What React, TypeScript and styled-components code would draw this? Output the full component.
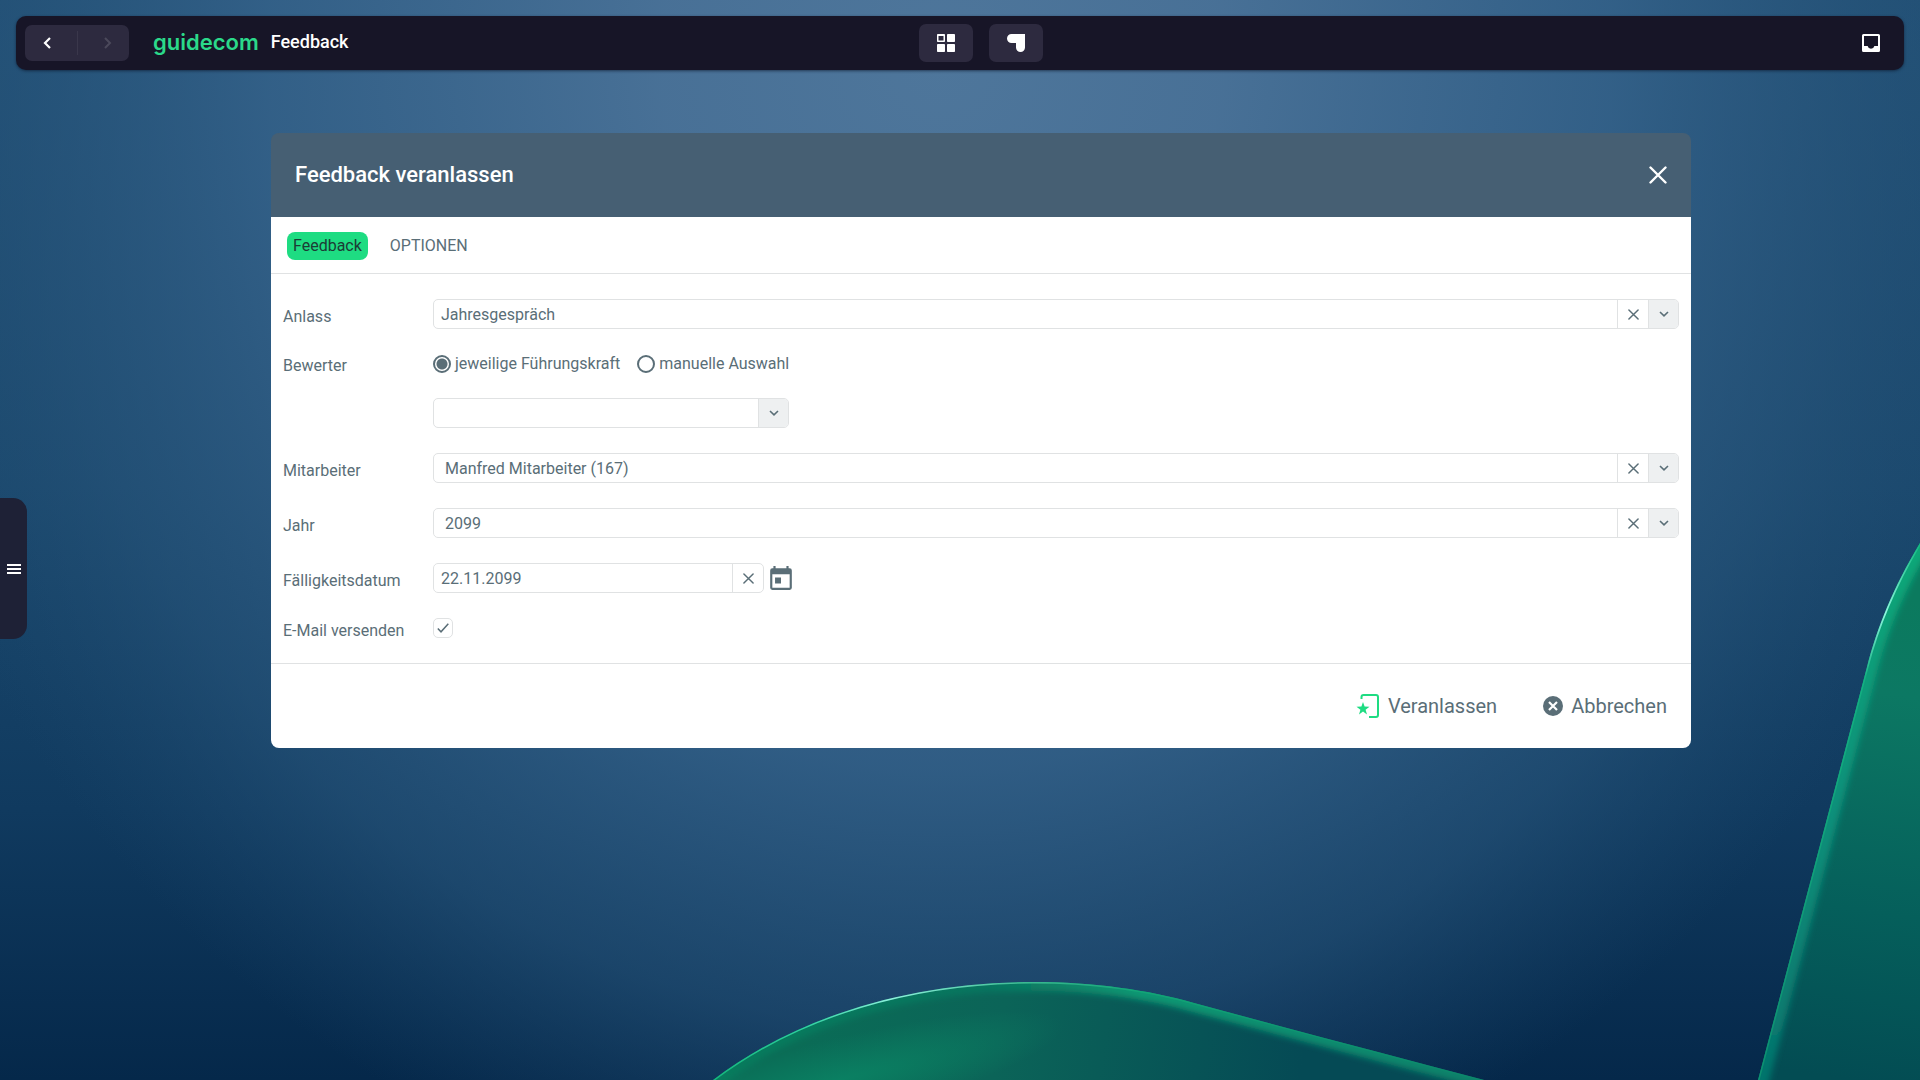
import React, { useRef, useState } from 'react';
import styled, { createGlobalStyle } from 'styled-components';

const ink = '#5a6e77';
const line = '#e0e2e3';
const green = '#1edc82';

const GlobalStyle = createGlobalStyle`
  *, *::before, *::after { box-sizing: border-box; }
  body {
    margin: 0;
    font-family: Roboto, 'Liberation Sans', sans-serif;
    font-size: 16px;
    line-height: 20px;
    color: ${ink};
    background: #143c60;
  }
  button, input, select { font: inherit; color: inherit; }
`;

const Page = styled.div`
  position: relative;
  display: flex;
  flex-direction: column;
  min-height: 100vh;
  padding: 16px;
  overflow: hidden;
  isolation: isolate;
`;

const Wallpaper = styled.svg`
  position: absolute;
  inset: 0;
  z-index: -1;
  width: 100%;
  height: 100%;
`;

const TopBar = styled.header`
  display: grid;
  grid-template-columns: 1fr auto 1fr;
  align-items: center;
  height: 54px;
  padding: 0 16px 0 9px;
  border-radius: 10px;
  background: #171527;
  box-shadow: 0 1px 3px rgba(10, 20, 40, 0.6);
  color: #fff;
`;

const BarStart = styled.div`
  display: flex;
  align-items: center;
`;

const History = styled.nav`
  display: flex;
  align-items: center;
  height: 36px;
  border-radius: 7px;
  background: #2d2a3f;
`;

const HistoryButton = styled.button`
  display: grid;
  place-items: center;
  width: 52px;
  height: 24px;
  padding: 0 8px 0 0;
  border: 0;
  background: none;
  color: #fff;

  & + & {
    padding: 0 0 0 8px;
    border-left: 1px solid #3a374b;
  }
  &:disabled { color: #4b495b; }
`;

const Names = styled.div`
  display: flex;
  align-items: center;
  gap: 12px;
  margin-left: 24px;
  padding-bottom: 2px;
`;

const Brand = styled.a`
  font-family: Inter, Roboto, sans-serif;
  font-size: 22px;
  font-weight: 600;
  line-height: 28px;
  color: #2bd98a;
  text-decoration: none;
`;

const AppName = styled.span`
  font-size: 18px;
  font-weight: 500;
  line-height: 24px;
`;

const BarCenter = styled.div`
  display: flex;
  gap: 16px;
  padding-left: 48px;
`;

const TileButton = styled.button`
  display: grid;
  place-items: center;
  width: 54px;
  height: 38px;
  padding: 0;
  border: 0;
  border-radius: 7px;
  background: #2d2a3f;
  color: #fff;
`;

const InboxButton = styled.button`
  display: grid;
  place-items: center;
  justify-self: end;
  width: 34px;
  height: 34px;
  padding: 0;
  border: 0;
  background: none;
  color: #fff;
`;

const DrawerHandle = styled.button`
  position: absolute;
  left: 0;
  top: 498px;
  display: grid;
  place-items: center end;
  width: 27px;
  height: 141px;
  padding: 0 6px 0 0;
  border: 0;
  border-radius: 0 14px 14px 0;
  background: #1e2136;
  color: #fff;
`;

const Dialog = styled.section`
  margin: 63px 213px 0 255px;
  border-radius: 8px;
  overflow: hidden;
`;

const DialogHeader = styled.header`
  display: flex;
  align-items: center;
  justify-content: space-between;
  height: 84px;
  padding: 0 24px;
  background: #465f73;
  color: #fff;
`;

const Title = styled.h1`
  margin: 0;
  font-size: 22px;
  font-weight: 500;
  line-height: 28px;
`;

const CloseButton = styled.button`
  display: grid;
  place-items: center;
  padding: 0;
  border: 0;
  background: none;
  color: inherit;
`;

const Tabs = styled.div`
  display: flex;
  align-items: center;
  gap: 16px;
  height: 57px;
  padding: 2px 16px 0;
  border-bottom: 1px solid ${line};
  background: #fff;
`;

const Tab = styled.button<{ $active?: boolean }>`
  height: 28px;
  padding: 0 6px;
  border: 0;
  border-radius: 8px;
  line-height: 20px;
  background: ${(p) => (p.$active ? green : 'transparent')};
  color: ${(p) => (p.$active ? '#1c3b35' : ink)};
`;

const Form = styled.form`
  background: #fff;
`;

const Rows = styled.div`
  display: flex;
  flex-direction: column;
  gap: 25px;
  padding: 25px 12px;
`;

const Row = styled.div`
  display: grid;
  grid-template-columns: 150px minmax(0, 1fr);
  align-items: center;
`;

const Label = styled.label`
  padding-top: 4px;
  line-height: 15px;
`;

const RadioGroup = styled.div`
  display: flex;
  gap: 17px;
  height: 19px;
`;

const Choice = styled.label`
  display: flex;
  align-items: center;
  gap: 4px;
`;

const Radio = styled.input`
  appearance: none;
  width: 18px;
  height: 18px;
  margin: 0;
  border: 2px solid ${ink};
  border-radius: 50%;

  &:checked {
    background: radial-gradient(circle, ${ink} 5px, transparent 6px);
  }
`;

const FieldBox = styled.div<{ $width?: number }>`
  display: flex;
  width: ${(p) => (p.$width ? p.$width + 'px' : '100%')};
  height: 30px;
  border: 1px solid ${line};
  border-radius: 5px;
  overflow: hidden;
`;

const Select = styled.select<{ $indent?: boolean }>`
  appearance: none;
  flex: 1;
  min-width: 0;
  padding: 1px ${(p) => (p.$indent ? 11 : 7)}px 0;
  border: 0;
  background: none;
`;

const TextInput = styled.input`
  flex: 1;
  min-width: 0;
  padding: 1px 7px 0;
  border: 0;
  background: none;
`;

const FieldButton = styled.button<{ $shaded?: boolean }>`
  display: grid;
  place-items: center;
  width: ${(p) => (p.$shaded ? 30 : 31)}px;
  padding: 0;
  border: 0;
  border-left: 1px solid ${line};
  background: ${(p) => (p.$shaded ? '#eef0f1' : 'none')};
`;

const DateGroup = styled.div`
  display: flex;
  align-items: center;
  gap: 4px;
`;

const IconButton = styled.button`
  display: grid;
  place-items: center;
  padding: 0;
  border: 0;
  background: none;
`;

const CheckWrap = styled.span`
  display: grid;
  width: 20px;
  height: 20px;

  > * { grid-area: 1 / 1; }
  > svg { place-self: center; pointer-events: none; }
  > input:not(:checked) + svg { visibility: hidden; }
`;

const Checkbox = styled.input`
  appearance: none;
  width: 20px;
  height: 20px;
  margin: 0;
  border: 1px solid ${line};
  border-radius: 5px;
`;

const Actions = styled.footer`
  display: flex;
  align-items: center;
  justify-content: flex-end;
  gap: 46px;
  height: 85px;
  padding: 0 24px;
  border-top: 1px solid ${line};
`;

const Action = styled.button`
  display: flex;
  align-items: center;
  gap: 8px;
  padding: 0;
  border: 0;
  background: none;
  font-size: 20px;
  line-height: 28px;
`;

const Cross = ({ size, weight }: { size: number; weight: number }) => (
  <svg width={size} height={size} viewBox="0 0 18 18" fill="none" stroke="currentColor" strokeWidth={weight} strokeLinecap="round" aria-hidden>
    <path d="M1.5 1.5 16.5 16.5M16.5 1.5 1.5 16.5" />
  </svg>
);

const ChevronDown = () => (
  <svg width="10" height="6" viewBox="0 0 10 6" fill="none" stroke="currentColor" strokeWidth="1.6" aria-hidden>
    <path d="M1 1l4 3.8L9 1" />
  </svg>
);

type DropdownProps = {
  id: string;
  name?: string;
  initial: string;
  indent?: boolean;
  width?: number;
  clearable?: boolean;
};

function Dropdown({ id, name, initial, indent, width, clearable }: DropdownProps) {
  const ref = useRef<HTMLSelectElement>(null);
  const [value, setValue] = useState(initial);
  return (
    <FieldBox $width={width}>
      <Select id={id} ref={ref} $indent={indent} aria-label={name} value={value} onChange={(e) => setValue(e.target.value)}>
        <option value="" />
        {initial && <option value={initial}>{initial}</option>}
      </Select>
      {clearable && (
        <FieldButton type="button" aria-label="Leeren" onClick={() => setValue('')}>
          <Cross size={11} weight={2.4} />
        </FieldButton>
      )}
      <FieldButton type="button" $shaded aria-label="Auswahl öffnen" onClick={() => ref.current?.showPicker()}>
        <ChevronDown />
      </FieldButton>
    </FieldBox>
  );
}

const HILL = 'M713 1080C800 1014 915 982 1033 982C1095 982 1148 990 1194 1003C1290 1029 1390 1055 1488 1081V1100H690Z';
const SLOPE = 'M1758 1080L1867 667C1877 628 1893 588 1920 543V520H1960V1100H1753Z';

const Background = () => (
  <Wallpaper viewBox="0 0 1920 1080" preserveAspectRatio="xMidYMid slice" aria-hidden>
    <defs>
      <linearGradient id="sky" x1="0" y1="0" x2="0" y2="1">
        <stop offset="0" stopColor="#235277" />
        <stop offset="0.45" stopColor="#1b496e" />
        <stop offset="0.75" stopColor="#103a5f" />
        <stop offset="1" stopColor="#05284a" />
      </linearGradient>
      <radialGradient id="glow" gradientUnits="userSpaceOnUse" cx="0" cy="0" r="1" gradientTransform="translate(940 60) scale(1120 1180)">
        <stop offset="0" stopColor="#4e769b" />
        <stop offset="0.25" stopColor="#4a7298" stopOpacity="0.95" />
        <stop offset="0.6" stopColor="#35628a" stopOpacity="0.85" />
        <stop offset="0.82" stopColor="#265379" stopOpacity="0.6" />
        <stop offset="1" stopColor="#1d496e" stopOpacity="0" />
      </radialGradient>
      <linearGradient id="hillFill" gradientUnits="userSpaceOnUse" x1="800" y1="1000" x2="1300" y2="1080">
        <stop offset="0" stopColor="#0a6c56" />
        <stop offset="0.4" stopColor="#0b6458" />
        <stop offset="1" stopColor="#054a55" />
      </linearGradient>
      <radialGradient id="hillGlow" gradientUnits="userSpaceOnUse" cx="0" cy="0" r="1" gradientTransform="translate(840 1080) rotate(-14) scale(230 42)">
        <stop offset="0" stopColor="#0a8062" />
        <stop offset="1" stopColor="#0a8062" stopOpacity="0" />
      </radialGradient>
      <linearGradient id="hillRim" gradientUnits="userSpaceOnUse" x1="713" y1="0" x2="1488" y2="0">
        <stop offset="0" stopColor="#14b67c" />
        <stop offset="0.12" stopColor="#2fd0a0" />
        <stop offset="0.23" stopColor="#8df0dc" />
        <stop offset="0.4" stopColor="#3cba92" />
        <stop offset="0.55" stopColor="#12a577" />
        <stop offset="1" stopColor="#0a8a6a" stopOpacity="0.5" />
      </linearGradient>
      <linearGradient id="hillBand" gradientUnits="userSpaceOnUse" x1="713" y1="0" x2="1488" y2="0">
        <stop offset="0" stopColor="#0b9a6c" stopOpacity="0.3" />
        <stop offset="0.35" stopColor="#0d9a70" stopOpacity="0.3" />
        <stop offset="0.55" stopColor="#0c9873" />
        <stop offset="1" stopColor="#0a806a" />
      </linearGradient>
      <linearGradient id="slopeFill" gradientUnits="userSpaceOnUse" x1="1920" y1="600" x2="1850" y2="1080">
        <stop offset="0" stopColor="#0b7a5e" />
        <stop offset="0.2" stopColor="#0c7863" />
        <stop offset="0.65" stopColor="#055f5b" />
        <stop offset="1" stopColor="#034c53" />
      </linearGradient>
      <linearGradient id="slopeBand" gradientUnits="userSpaceOnUse" x1="0" y1="543" x2="0" y2="1080">
        <stop offset="0" stopColor="#0ca878" />
        <stop offset="0.5" stopColor="#0a907a" />
        <stop offset="1" stopColor="#06746c" />
      </linearGradient>
      <linearGradient id="slopeRim" gradientUnits="userSpaceOnUse" x1="0" y1="543" x2="0" y2="1080">
        <stop offset="0" stopColor="#10b880" />
        <stop offset="0.13" stopColor="#8ff5df" />
        <stop offset="0.25" stopColor="#14b082" />
        <stop offset="1" stopColor="#0c8f70" />
      </linearGradient>
      <clipPath id="hillClip"><path d={HILL} /></clipPath>
      <clipPath id="slopeClip"><path d={SLOPE} /></clipPath>
      <filter id="soft" x="-10%" y="-30%" width="120%" height="160%"><feGaussianBlur stdDeviation="3" /></filter>
    </defs>
    <rect width="1920" height="1080" fill="url(#sky)" />
    <rect width="1920" height="1080" fill="url(#glow)" />
    <g clipPath="url(#hillClip)">
      <path d={HILL} fill="url(#hillFill)" />
      <rect x="600" y="1000" width="500" height="80" fill="url(#hillGlow)" />
      <path d={HILL} fill="none" stroke="url(#hillBand)" strokeWidth="18" filter="url(#soft)" />
      <path d={HILL} fill="none" stroke="url(#hillRim)" strokeWidth="3" />
    </g>
    <g clipPath="url(#slopeClip)">
      <path d={SLOPE} fill="url(#slopeFill)" />
      <path d={SLOPE} fill="none" stroke="url(#slopeBand)" strokeWidth="22" filter="url(#soft)" />
      <path d={SLOPE} fill="none" stroke="url(#slopeRim)" strokeWidth="3" />
    </g>
  </Wallpaper>
);

export default function App() {
  const [date, setDate] = useState('22.11.2099');
  return (
    <Page>
      <GlobalStyle />
      <Background />
      <TopBar>
        <BarStart>
          <History aria-label="Verlauf">
            <HistoryButton type="button" aria-label="Zurück">
              <svg width="8" height="12" viewBox="0 0 8 12" fill="none" stroke="currentColor" strokeWidth="2.2"><path d="M7 1 2 6l5 5" /></svg>
            </HistoryButton>
            <HistoryButton type="button" aria-label="Vorwärts" disabled>
              <svg width="8" height="12" viewBox="0 0 8 12" fill="none" stroke="currentColor" strokeWidth="2"><path d="m1 1 5 5-5 5" /></svg>
            </HistoryButton>
          </History>
          <Names>
            <Brand href="#">guidecom</Brand>
            <AppName>Feedback</AppName>
          </Names>
        </BarStart>
        <BarCenter>
          <TileButton type="button" aria-label="Kacheln">
            <svg width="18" height="18" viewBox="0 0 18 18" fill="currentColor">
              <path fillRule="evenodd" d="M.8 0h6.4q.8 0 .8.8v6.4q0 .8-.8.8H.8Q0 8 0 7.200V.8Q0 0 .8 0ZM1.500 2v4.500h5V2Z" />
              <rect x="10" width="8" height="8" rx=".8" />
              <rect y="10" width="8" height="8" rx=".8" />
              <rect x="10" y="10" width="8" height="8" rx=".8" />
            </svg>
          </TileButton>
          <TileButton type="button" aria-label="Guide">
            <svg width="18" height="18" viewBox="0 0 18 18" fill="currentColor">
              <path d="M4.500 0H18v13.500a4.500 4.500 0 0 1-9 0V9H4.500a4.500 4.500 0 0 1 0-9Z" />
            </svg>
          </TileButton>
        </BarCenter>
        <InboxButton type="button" aria-label="Posteingang">
          <svg width="18" height="18" viewBox="0 0 18 18" fill="currentColor">
            <path fillRule="evenodd" d="M1.500 0h15Q18 0 18 1.500v15q0 1.500-1.500 1.500h-15Q0 18 0 16.500v-15Q0 0 1.500 0ZM2 2v10h3.600a3.500 3.500 0 0 0 6.800 0H16V2Z" />
          </svg>
        </InboxButton>
      </TopBar>

      <DrawerHandle type="button" aria-label="Menü öffnen">
        <svg width="14" height="10" viewBox="0 0 14 10" fill="currentColor">
          <path d="M0 0h14v2H0ZM0 4h14v2H0ZM0 8h14v2H0Z" />
        </svg>
      </DrawerHandle>

      <Dialog role="dialog" aria-labelledby="dialog-title">
        <DialogHeader>
          <Title id="dialog-title">Feedback veranlassen</Title>
          <CloseButton type="button" aria-label="Schließen"><Cross size={18} weight={2.4} /></CloseButton>
        </DialogHeader>
        <Tabs role="tablist">
          <Tab type="button" role="tab" aria-selected $active>Feedback</Tab>
          <Tab type="button" role="tab" aria-selected={false}>OPTIONEN</Tab>
        </Tabs>
        <Form onSubmit={(e) => e.preventDefault()}>
          <Rows>
            <Row>
              <Label htmlFor="anlass">Anlass</Label>
              <Dropdown id="anlass" initial="Jahresgespräch" clearable />
            </Row>
            <Row>
              <Label as="span" id="bewerter">Bewerter</Label>
              <RadioGroup role="radiogroup" aria-labelledby="bewerter">
                <Choice><Radio type="radio" name="bewerter" defaultChecked />jeweilige Führungskraft</Choice>
                <Choice><Radio type="radio" name="bewerter" />manuelle Auswahl</Choice>
              </RadioGroup>
            </Row>
            <Row>
              <span />
              <Dropdown id="bewerter-auswahl" name="Bewerter auswählen" initial="" width={356} />
            </Row>
            <Row>
              <Label htmlFor="mitarbeiter">Mitarbeiter</Label>
              <Dropdown id="mitarbeiter" initial="Manfred Mitarbeiter (167)" indent clearable />
            </Row>
            <Row>
              <Label htmlFor="jahr">Jahr</Label>
              <Dropdown id="jahr" initial="2099" indent clearable />
            </Row>
            <Row>
              <Label htmlFor="datum">Fälligkeitsdatum</Label>
              <DateGroup>
                <FieldBox $width={331}>
                  <TextInput id="datum" value={date} onChange={(e) => setDate(e.target.value)} />
                  <FieldButton type="button" aria-label="Datum leeren" onClick={() => setDate('')}>
                    <Cross size={11} weight={2.4} />
                  </FieldButton>
                </FieldBox>
                <IconButton type="button" aria-label="Kalender öffnen">
                  <svg width="26" height="26" viewBox="0 0 24 24" fill="currentColor">
                    <path fillRule="evenodd" d="M4 3h1V1h2v2h10V1h2v2h1q2 0 2 2v16q0 2-2 2H4q-2 0-2-2V5q0-2 2-2ZM4 8.500V21h16V8.500ZM6.500 11.500h5.500v5.500H6.500Z" />
                  </svg>
                </IconButton>
              </DateGroup>
            </Row>
            <Row>
              <Label htmlFor="email">E-Mail versenden</Label>
              <CheckWrap>
                <Checkbox id="email" type="checkbox" defaultChecked />
                <svg width="12" height="10" viewBox="0 0 12 10" fill="none" stroke="currentColor" strokeWidth="1.500"><path d="M.8 5.500 4 8.800 11.300.8" /></svg>
              </CheckWrap>
            </Row>
          </Rows>
          <Actions>
            <Action type="submit">
              <svg width="24" height="24" viewBox="0 0 24 24" fill="none" stroke={green} strokeWidth="2">
                <path d="M5.500 5V3q0-2 2-2H20q2 0 2 2v18q0 2-2 2h-7" />
                <path fill={green} stroke="none" d="m7 8 1.600 4.600 4.900.1-3.900 3 1.400 4.700L7 17.600l-4 2.800 1.400-4.700-3.900-3 4.900-.1Z" />
              </svg>
              Veranlassen
            </Action>
            <Action type="button">
              <svg width="20" height="20" viewBox="0 0 20 20">
                <circle cx="10" cy="10" r="10" fill="currentColor" />
                <path d="m6 6 8 8m0-8-8 8" stroke="#fff" strokeWidth="2.200" />
              </svg>
              Abbrechen
            </Action>
          </Actions>
        </Form>
      </Dialog>
    </Page>
  );
}
